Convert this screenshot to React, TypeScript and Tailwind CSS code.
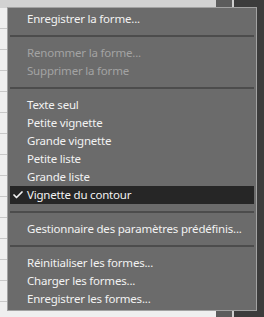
import { Check } from 'lucide-react'

type Item = { label: string; disabled?: boolean; checked?: boolean } | 'sep'

const items: Item[] = [
  { label: 'Enregistrer la forme...' },
  'sep',
  { label: 'Renommer la forme...', disabled: true },
  { label: 'Supprimer la forme', disabled: true },
  'sep',
  { label: 'Texte seul' },
  { label: 'Petite vignette' },
  { label: 'Grande vignette' },
  { label: 'Petite liste' },
  { label: 'Grande liste' },
  { label: 'Vignette du contour', checked: true },
  'sep',
  { label: 'Gestionnaire des paramètres prédéfinis...' },
  'sep',
  { label: 'Réinitialiser les formes...' },
  { label: 'Charger les formes...' },
  { label: 'Enregistrer les formes...' },
]

export default function App() {
  return (
    <div className="relative h-[317px] w-[264px] overflow-hidden bg-[#d4d4d4]" style={{ fontFamily: '"Noto Sans", "Open Sans", sans-serif' }}>
      {/* background panels */}
      <div className="flex h-full">
        <div className="flex w-[216px] flex-col">
          <div className="h-[8px] bg-[#d2d2d2]" />
          <div className="flex flex-1 flex-col bg-[#efefef]">
            {Array.from({ length: 14 }).map((_, i) => (
              <div key={i} className="h-[21px] border-b border-[#c8c8c8]" />
            ))}
          </div>
        </div>
        <div className="w-[16px] bg-[#5c5c5c]" />
        <div className="w-[2px] bg-[#cfcfcf]" />
        <div className="flex-1 bg-[#3c3c3c]" />
      </div>

      {/* menu */}
      <div className="absolute left-[7px] top-[7px] w-[250px] border border-[#a2a2a2] bg-[#6b6b6b] px-[2px] py-[2px] text-[11.5px] leading-[18px] text-[#f2f2f2]">
        {items.map((it, i) =>
          it === 'sep' ? (
            <div key={i} className="flex h-[16px] items-center">
              <div className="h-[2px] w-full bg-[#4c4c4c]" />
            </div>
          ) : (
            <div
              key={i}
              className={`flex h-[18px] items-center whitespace-nowrap pl-[17px] tracking-[-0.2px] ${it.checked ? 'bg-[#262626]' : ''} ${it.disabled ? 'text-[#a3a3a3]' : ''}`}
            >
              {it.checked && <Check className="-ml-[15px] mr-[3px] h-[12px] w-[12px]" strokeWidth={3.5} />}
              <span>{it.label}</span>
            </div>
          )
        )}
      </div>
    </div>
  )
}
